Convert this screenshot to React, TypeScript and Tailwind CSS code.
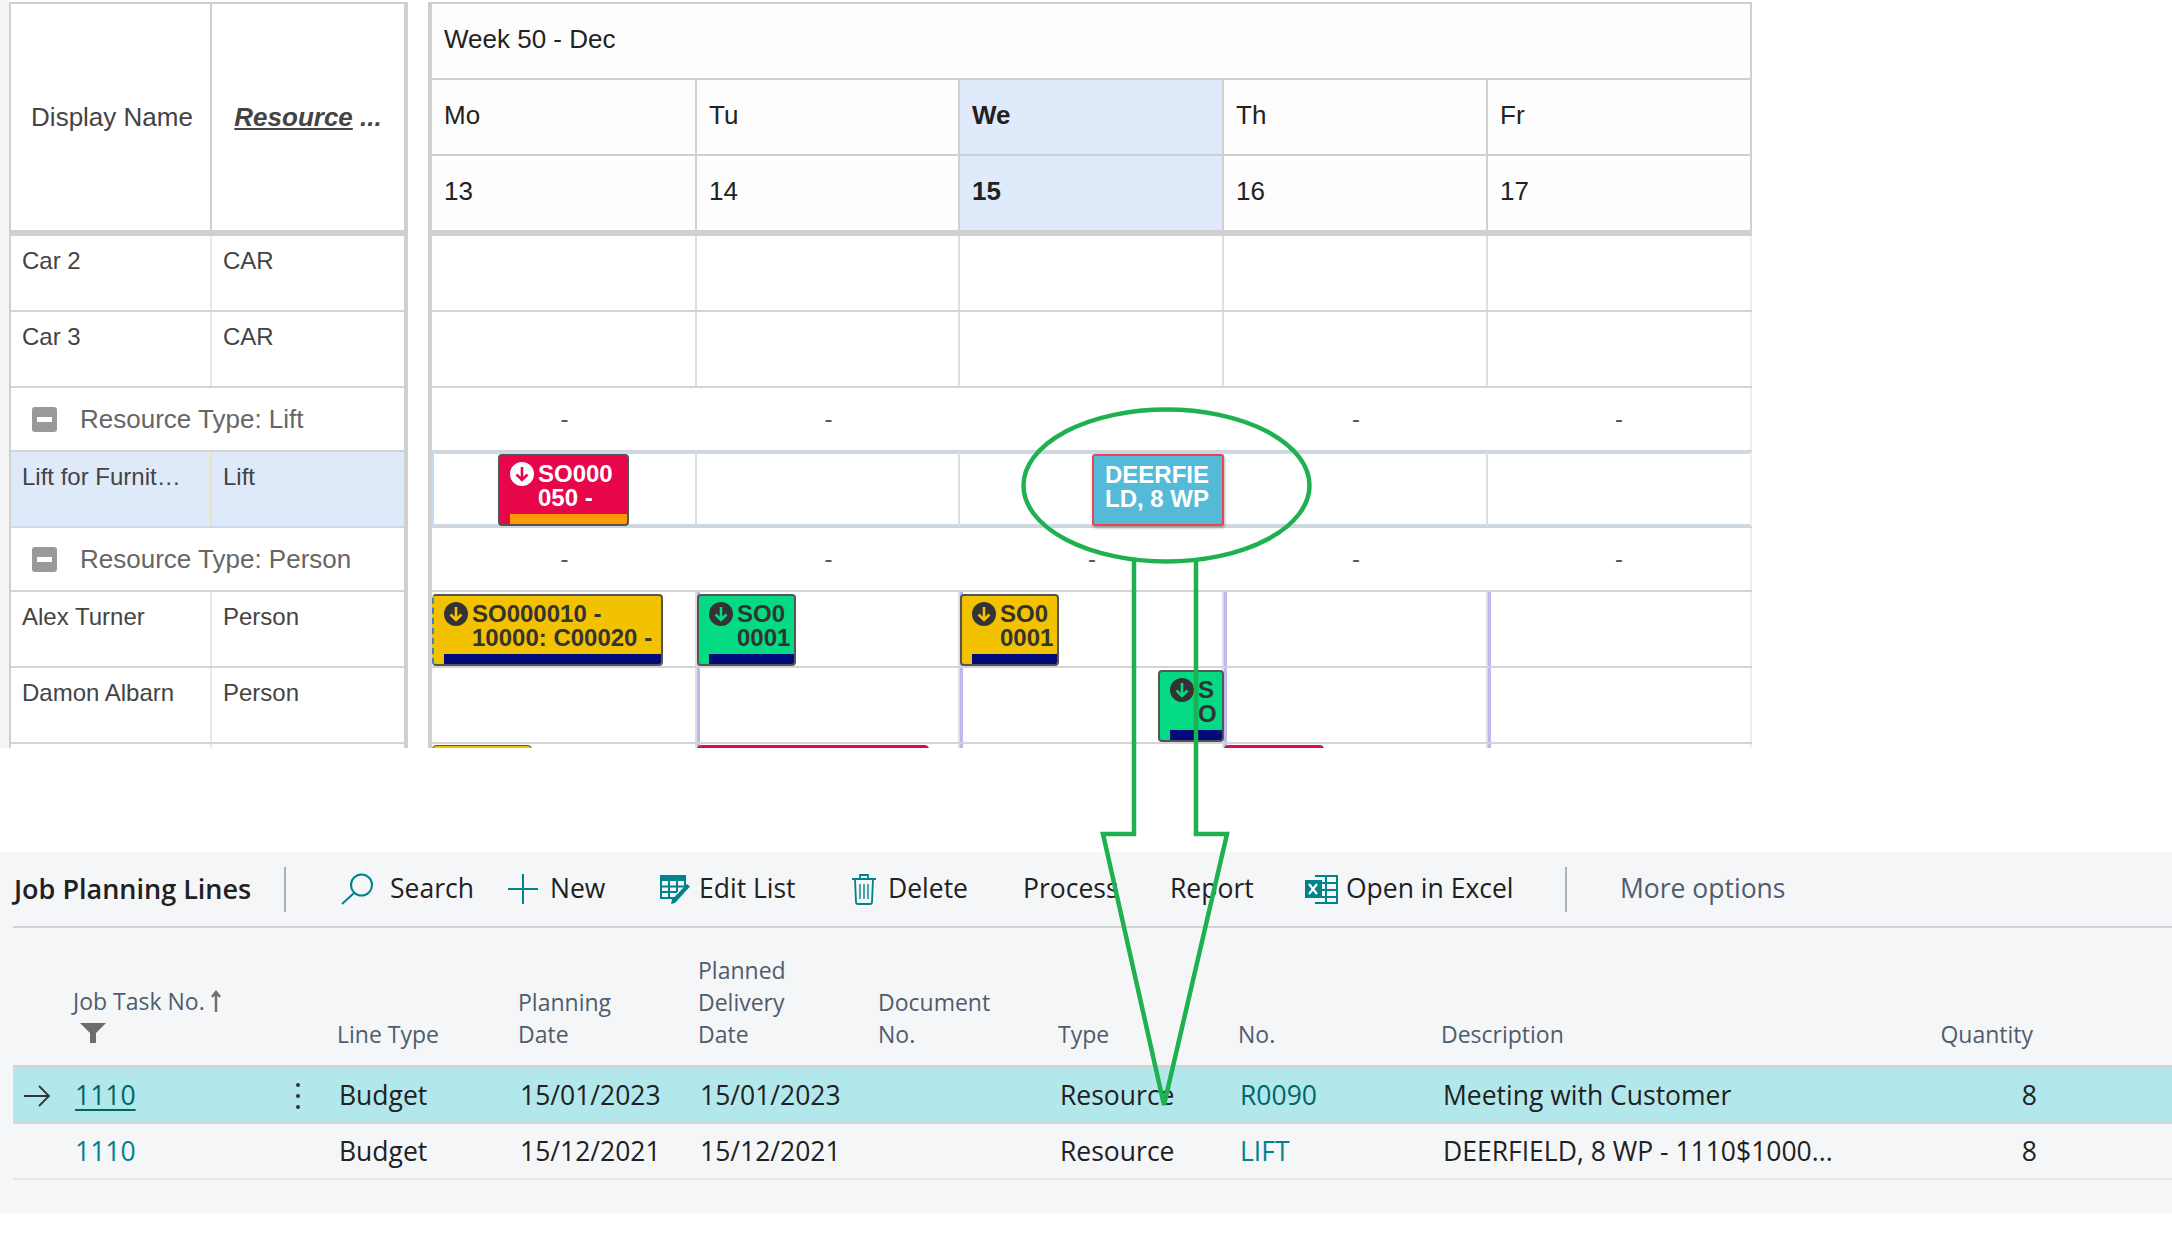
import React from 'react';

const COLS = ['w-[265px]', 'w-[263px]', 'w-[264px]', 'w-[264px]', 'w-[264px]'];

function ArrowBadge({ circle, arrow }: { circle: string; arrow: string }) {
  return (
    <svg width="24" height="24" viewBox="0 0 24 24" className="shrink-0">
      <circle cx="12" cy="12" r="12" fill={circle} />
      <path d="M12 5v13M6.500 12.500 12 18l5.500-5.500" fill="none" stroke={arrow} strokeWidth="2.600" />
    </svg>
  );
}

type ChipProps = {
  ml: string;
  w: string;
  bg: string;
  barColor: string;
  lines: string[];
  light?: boolean;
  fill: string;
  dashed?: boolean;
};

function Chip({ ml, w, bg, barColor, lines, light, fill, dashed }: ChipProps) {
  return (
    <div className={`${ml} ${w} ${bg} relative z-10 mt-[2px] flex h-[72px] flex-col overflow-hidden rounded-[4px] border-2 border-[#555] ${dashed ? 'border-l-[#3f7fd0] [border-left-style:dashed]' : ''}`}>
      <div className="flex gap-[4px] pl-[10px] pt-[6px]">
        <ArrowBadge circle={light ? '#ffffff' : '#333333'} arrow={fill} />
        <div className={`text-[24px] font-bold leading-[24px] whitespace-nowrap ${light ? 'text-white' : 'text-[#333]'}`}>
          {lines.map((l) => <div key={l}>{l}</div>)}
        </div>
      </div>
      <div className={`${barColor} mt-auto ml-[10px] h-[10px] shrink-0`} />
    </div>
  );
}

function Deerfield() {
  return (
    <div className="relative z-10 mt-[2px] ml-[132px] flex h-[72px] w-[132px] items-center justify-center rounded-[3px] border-2 border-[#ee4450] bg-[#55bad8] pb-[6px] pr-[2px] text-center text-[24px] font-bold leading-[24px] text-white shadow-[1px_2px_3px_rgba(0,0,0,0.3)]">
      <div>DEERFIE<br />LD, 8 WP</div>
    </div>
  );
}

function LeftRow({ h, a, b, selected }: { h: string; a: string; b: string; selected?: boolean }) {
  return (
    <div className={`${h} flex border-b-2 ${selected ? 'border-[#c8daf2] bg-[#deeafa]' : 'border-[#d4d4d4]'} text-[24px] leading-[28px] text-[#444]`}>
      <div className={`w-[201px] truncate pl-[11px] pr-[8px] pt-[11px] border-r-2 ${selected ? 'border-[#f0e3b8]' : 'border-[#e8e8e8]'}`}>{a}</div>
      <div className="pl-[11px] pt-[11px]">{b}</div>
    </div>
  );
}

function GroupLeft({ h, label }: { h: string; label: string }) {
  return (
    <div className={`${h} flex items-center gap-[23px] border-b-2 border-[#d4d4d4] pl-[21px] text-[26px] text-[#666]`}>
      <span className="flex h-[25px] w-[25px] items-center justify-center rounded-[3px] bg-[#999]">
        <span className="h-[5px] w-[15px] bg-white" />
      </span>
      {label}
    </div>
  );
}

function GridRow({ h, purple, framed, children }: { h: string; purple?: boolean; framed?: boolean; children?: React.ReactNode[] }) {
  return (
    <div className={`${h} flex border-b-2 border-[#d4d4d4] ${framed ? 'shadow-[inset_0_0_0_2px_#c8daf2]' : ''}`}>
      {COLS.map((c, i) => (
        <div key={c + i} className={`${c} h-full shrink-0 border-r-2 ${i === 4 ? 'border-[#eeeeee]' : 'border-[#dedede]'} ${purple && i > 0 ? 'border-l-[3px] border-l-[#bdb8ee]' : ''}`}>
          {children ? children[i] : null}
        </div>
      ))}
    </div>
  );
}

function DashRow({ h, hide }: { h: string; hide?: number }) {
  return (
    <div className={`${h} flex border-b-2 border-[#d4d4d4]`}>
      {COLS.map((c, i) => (
        <div key={c + i} className={`${c} flex shrink-0 items-center justify-center text-[24px] text-[#555] ${i === 4 ? 'border-r-2 border-[#eeeeee]' : ''}`}>
          {i === hide ? '' : '-'}
        </div>
      ))}
    </div>
  );
}

function Gantt() {
  return (
    <div className="flex h-[748px] overflow-hidden font-['Liberation_Sans',sans-serif]">
      <div className="w-[9px] shrink-0 bg-[#f5f5f5]" />
      <div className="mt-[2px] w-[399px] shrink-0 border-l-2 border-r-4 border-t-2 border-[#d0d0d0]">
        <div className="flex h-[232px] border-b-[6px] border-[#d0d0d0] text-[26px] text-[#444]">
          <div className="flex w-[201px] items-center justify-center border-r-2 border-[#d0d0d0] pl-[3px]">Display Name</div>
          <div className="flex flex-1 items-center justify-center font-bold italic">
            <span className="underline">Resource </span><span>&nbsp;...</span>
          </div>
        </div>
        <LeftRow h="h-[76px]" a="Car 2" b="CAR" />
        <LeftRow h="h-[76px]" a="Car 3" b="CAR" />
        <GroupLeft h="h-[64px]" label="Resource Type: Lift" />
        <LeftRow h="h-[76px]" a="Lift for Furnit…" b="Lift" selected />
        <GroupLeft h="h-[64px]" label="Resource Type: Person" />
        <LeftRow h="h-[76px]" a="Alex Turner" b="Person" />
        <LeftRow h="h-[76px]" a="Damon Albarn" b="Person" />
        <LeftRow h="h-[76px]" a="" b="" />
      </div>

      <div className="ml-[20px] mt-[2px] w-[1324px] shrink-0 border-l-4 border-t-2 border-[#d0d0d0]">
        <div className="h-[232px] border-b-[6px] border-[#d0d0d0] bg-[#fdfdfd] text-[26px] text-[#222]">
          <div className="flex h-[76px] items-center border-b-2 border-r-2 border-[#d0d0d0] pb-[3px] pl-[12px]">Week 50 - Dec</div>
          <div className="flex h-[76px] border-b-2 border-[#d0d0d0]">
            {['Mo', 'Tu', 'We', 'Th', 'Fr'].map((d, i) => (
              <div key={d} className={`${COLS[i]} flex shrink-0 items-center border-r-2 border-[#d0d0d0] pb-[3px] pl-[12px] ${i === 2 ? 'bg-[#dfeafa] font-bold' : ''}`}>{d}</div>
            ))}
          </div>
          <div className="flex h-[74px]">
            {['13', '14', '15', '16', '17'].map((d, i) => (
              <div key={d} className={`${COLS[i]} flex shrink-0 items-center border-r-2 border-[#d0d0d0] pb-[3px] pl-[12px] ${i === 2 ? 'bg-[#dfeafa] font-bold' : ''}`}>{d}</div>
            ))}
          </div>
        </div>
        <GridRow h="h-[76px]" />
        <GridRow h="h-[76px]" />
        <DashRow h="h-[64px]" hide={2} />
        <GridRow h="h-[76px]" framed>
          {[
            <Chip key="a" ml="ml-[66px]" w="w-[131px]" bg="bg-[#e8064b]" barColor="bg-[#fb9a06]" lines={['SO000', '050 -']} light fill="#e8064b" />,
            null,
            <Deerfield key="b" />,
            null,
            null,
          ]}
        </GridRow>
        <DashRow h="h-[64px]" />
        <GridRow h="h-[76px]" purple>
          {[
            <Chip key="a" ml="ml-0" w="w-[231px]" bg="bg-[#f2c200]" barColor="bg-[#000a78]" lines={['SO000010 -', '10000: C00020 -']} fill="#f2c200" dashed />,
            <Chip key="b" ml="-ml-[3px]" w="w-[99px]" bg="bg-[#04d984]" barColor="bg-[#000a78]" lines={['SO0', '0001']} fill="#04d984" />,
            <Chip key="c" ml="-ml-[3px]" w="w-[99px]" bg="bg-[#f2c200]" barColor="bg-[#000a78]" lines={['SO0', '0001']} fill="#f2c200" />,
            null,
            null,
          ]}
        </GridRow>
        <GridRow h="h-[76px]" purple>
          {[
            null,
            null,
            <Chip key="a" ml="ml-[195px]" w="w-[66px]" bg="bg-[#04d984]" barColor="bg-[#000a78]" lines={['S', 'O']} fill="#04d984" />,
            null,
            null,
          ]}
        </GridRow>
        <GridRow h="h-[76px]" purple>
          {[
            <div key="a" className="mt-[1px] h-[72px] w-[100px] rounded-[4px] border border-[#555] bg-[#f2c200]" />,
            <div key="b" className="-ml-[3px] mt-[1px] h-[72px] w-[232px] rounded-[4px] border border-[#555] bg-[#e8064b]" />,
            null,
            <div key="c" className="-ml-[3px] mt-[1px] h-[72px] w-[100px] rounded-[4px] border border-[#555] bg-[#e8064b]" />,
            null,
          ]}
        </GridRow>
      </div>
    </div>
  );
}

const TEAL = '#00838a';

function SearchIcon() {
  return (
    <svg width="33" height="32" viewBox="0 0 33 32" fill="none" stroke={TEAL} strokeWidth="2">
      <circle cx="20.500" cy="12" r="10.500" />
      <path d="M13 20 1 31" />
    </svg>
  );
}

function PlusIcon() {
  return (
    <svg width="30" height="30" viewBox="0 0 30 30" stroke={TEAL} strokeWidth="2">
      <path d="M15 0v30M0 15h30" />
    </svg>
  );
}

function EditListIcon() {
  return (
    <svg width="31" height="29" viewBox="0 0 31 29" fill="none">
      <path d="M0 0h26v6H0z" fill={TEAL} />
      <path d="M1 6v17h15M1 11.500h24M1 17h16M9 6v17M17 6v11M25 6v6" stroke={TEAL} strokeWidth="2" />
      <path d="M27 9l3 2.500L15 28l-4 1 1-4.500z" fill={TEAL} />
    </svg>
  );
}

function TrashIcon() {
  return (
    <svg width="24" height="31" viewBox="0 0 24 31" fill="none" stroke={TEAL} strokeWidth="1.800">
      <path d="M0 5h24M8 5V1h8v4M3 5l1 23a2 2 0 0 0 2 2h12a2 2 0 0 0 2-2l1-23" />
      <path d="M8 10v15M12 10v15M16 10v15" strokeWidth="1.400" />
    </svg>
  );
}

function ExcelIcon() {
  return (
    <svg width="33" height="29" viewBox="0 0 33 29" fill="none">
      <path d="M10 1h22v27H10" stroke={TEAL} strokeWidth="2" />
      <path d="M21 1v27M10 8h22M10 15h22M10 22h22" stroke={TEAL} strokeWidth="2" />
      <path d="M0 5h17v18H0z" fill={TEAL} />
      <path d="M4 9l8 10M12 9 4 19" stroke="#fff" strokeWidth="2.200" />
    </svg>
  );
}

function ToolItem({ w, icon, label, gap = 'gap-[8px]' }: { w: string; icon?: React.ReactNode; label: string; gap?: string }) {
  return (
    <div className={`${w} flex shrink-0 items-center ${gap}`}>
      {icon}
      <span>{label}</span>
    </div>
  );
}

const HEAD_COLS = 'grid grid-cols-[324px_181px_180px_180px_180px_180px_203px_593px]';

function Lines() {
  return (
    <div className="h-[361px] bg-[#f5f6f8] pl-[13px] font-['Open_Sans',sans-serif] text-[#212121]">
      <div className="flex h-[76px] items-center border-b-[2px] border-[#d2d3d6] text-[26.500px]">
        <div className="w-[271px] shrink-0 pl-[1px] text-[27px] font-semibold">Job Planning Lines</div>
        <div className="h-[45px] w-[2px] shrink-0 bg-[#a9b2bd]" />
        <div className="w-[55px] shrink-0" />
        <ToolItem w="w-[167px]" icon={<SearchIcon />} label="Search" gap="gap-[16px]" />
        <ToolItem w="w-[152px]" icon={<PlusIcon />} label="New" gap="gap-[12px]" />
        <ToolItem w="w-[192px]" icon={<EditListIcon />} label="Edit List" />
        <ToolItem w="w-[171px]" icon={<TrashIcon />} label="Delete" gap="gap-[12px]" />
        <ToolItem w="w-[147px]" label="Process" />
        <ToolItem w="w-[135px]" label="Report" />
        <ToolItem w="w-[260px]" icon={<ExcelIcon />} label="Open in Excel" />
        <div className="h-[45px] w-[2px] shrink-0 bg-[#a9b2bd]" />
        <div className="ml-[53px] text-[#505c6d]">More options</div>
      </div>

      <div className={`${HEAD_COLS} h-[140px] items-end border-b-[3px] border-[#d4d4d4] pb-[15px] text-[23px] leading-[32px] text-[#505c6d]`}>
        <div className="pl-[60px]">
          <div className="mb-[6px] flex items-center gap-[6px]">
            Job Task No.
            <svg width="10" height="22" viewBox="0 0 10 22" fill="none" stroke="#707070" strokeWidth="2.500"><path d="M5 22V2M1 7l4-5 4 5" /></svg>
          </div>
          <svg width="26" height="20" viewBox="0 0 26 20" fill="#6d6d6d" className="ml-[7px] mb-[7px] mt-[2px]"><path d="M0 0h26L16 10v10h-6V10z" /></svg>
        </div>
        <div>Line Type</div>
        <div>Planning<br />Date</div>
        <div>Planned<br />Delivery<br />Date</div>
        <div>Document<br />No.</div>
        <div>Type</div>
        <div>No.</div>
        <div className="flex justify-between"><span>Description</span><span className="mr-[1px]">Quantity</span></div>
      </div>

      <div className={`${HEAD_COLS} h-[56px] items-center border-b-[2px] border-[#d4d4d4] bg-[#b2e8ec] pt-[2px] text-[26.500px]`}>
        <div className="flex items-center">
          <svg width="26" height="22" viewBox="0 0 26 22" fill="none" stroke="#333" strokeWidth="1.800" className="ml-[11px]"><path d="M0 11h25M15 1l10 10-10 10" /></svg>
          <span className="ml-[25px] text-[#00666b] underline underline-offset-4">1110</span>
          <span className="ml-[160px] flex flex-col gap-[7px]">
            <span className="h-[4px] w-[4px] rounded-full bg-[#333]" />
            <span className="h-[4px] w-[4px] rounded-full bg-[#333]" />
            <span className="h-[4px] w-[4px] rounded-full bg-[#333]" />
          </span>
        </div>
        <div className="pl-[2px]">Budget</div>
        <div className="pl-[2px]">15/01/2023</div>
        <div className="pl-[2px]">15/01/2023</div>
        <div />
        <div className="pl-[2px]">Resource</div>
        <div className="pl-[2px] text-[#00666b]">R0090</div>
        <div className="flex justify-between pl-[2px]"><span>Meeting with Customer</span><span className="mr-[-3px]">8</span></div>
      </div>
      <div className={`${HEAD_COLS} h-[56px] items-center border-b-[2px] border-[#e4e5e7] pt-[2px] text-[26.500px]`}>
        <div className="pl-[62px] text-[#00838a]">1110</div>
        <div className="pl-[2px]">Budget</div>
        <div className="pl-[2px]">15/12/2021</div>
        <div className="pl-[2px]">15/12/2021</div>
        <div />
        <div className="pl-[2px]">Resource</div>
        <div className="pl-[2px] text-[#00838a]">LIFT</div>
        <div className="flex justify-between pl-[2px]"><span>DEERFIELD, 8 WP - 1110$1000...</span><span className="mr-[-3px]">8</span></div>
      </div>
    </div>
  );
}

export default function App() {
  return (
    <div className="relative h-[1258px] w-[2172px] overflow-hidden bg-white">
      <Gantt />
      <div className="h-[104px]" />
      <Lines />
      {/* green annotation drawn on top of the screenshot */}
      <svg width="2172" height="1258" className="pointer-events-none absolute left-0 top-0 z-20" fill="none" stroke="#1fb14f" strokeWidth="4.500">
        <ellipse cx="1166.500" cy="485.500" rx="143" ry="76" />
        <path d="M1134 560V834H1103L1164 1105L1227 834H1196V560" />
      </svg>
    </div>
  );
}
